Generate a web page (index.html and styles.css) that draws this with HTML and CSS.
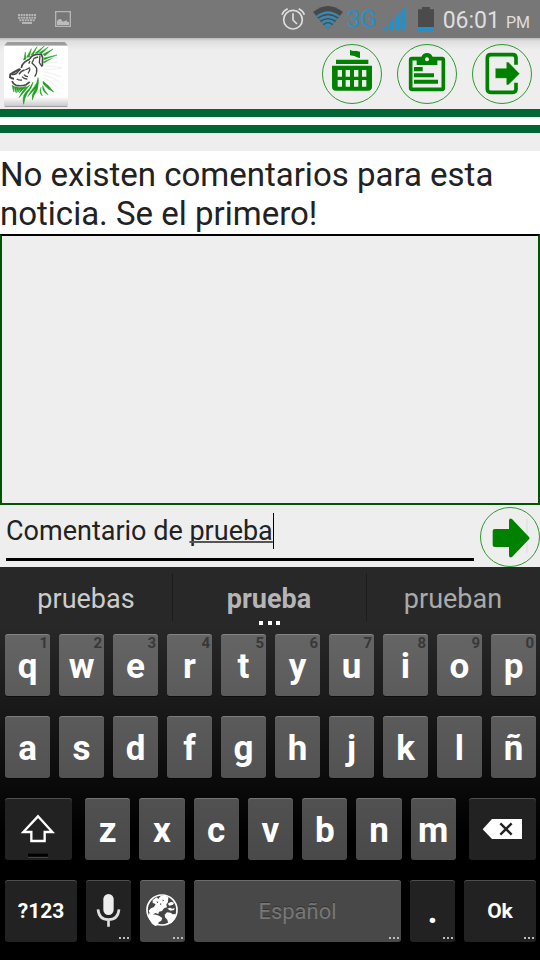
FILE: index.html
```html
<!DOCTYPE html>
<html lang="es">
<head>
<meta charset="utf-8">
<meta name="viewport" content="width=device-width, initial-scale=1">
<title>Comentarios</title>
<link rel="stylesheet" href="styles.css">
</head>
<body>
<div class="screen">
  <div class="status">
    <svg class="status-keyboard" viewBox="54 42 54 30" width="18" height="10" aria-hidden="true">
      <path d="M54 45h54M54 53h54M58 61h46" stroke="#b5b5b5" stroke-width="6" stroke-dasharray="6 2"/>
      <path d="M66 69h30" stroke="#b5b5b5" stroke-width="6"/>
    </svg>
    <svg class="status-picture" viewBox="165 33 48 48" width="16" height="16" aria-hidden="true">
      <path d="M167 35h44v44h-44z" fill="none" stroke="#b5b5b5" stroke-width="4"/>
      <path d="M171 75V64l6-7 6 1 5 7 7-2 4-2 4 5 4 0v9z" fill="#bcbcbc"/>
    </svg>
    <span class="spacer"></span>
    <svg class="status-alarm" viewBox="37 24 72 72" width="24" height="24" aria-hidden="true">
      <g fill="none" stroke="#dedede" stroke-width="5">
        <circle cx="73" cy="62" r="28"/>
        <path d="M73 43v20l12 12M40 47q4-12 17-18M90 29q13 6 17 18"/>
      </g>
    </svg>
    <svg class="status-wifi" viewBox="135 15 90 75" width="30" height="25" aria-hidden="true">
      <path d="M135 36Q180 0 225 36L180 88z" fill="#484848"/>
      <path d="M145 47Q180 20 215 47L180 88z" fill="#3b88ac"/>
      <path d="M149 55Q180 32 211 55M157 64Q180 48 203 64M166 74Q180 62 194 74" fill="none" stroke="#424c51" stroke-width="4"/>
    </svg>
    <span class="network">3G</span>
    <svg class="status-signal" viewBox="333 15 75 75" width="25" height="25" aria-hidden="true">
      <path d="M334 88l20-18v18zM358 88V63l12-11v36zM375 88V48l12-11v51zM392 88V32l14-14v70z" fill="#2590c8"/>
    </svg>
    <svg class="status-battery" viewBox="444 15 48 75" width="16" height="25" aria-hidden="true">
      <path d="M444 25h12v-7h24v7h12v65h-48z" fill="#4b4b4b"/>
      <path d="M444 78h48v12h-48z" fill="#2590c8"/>
    </svg>
    <span class="clock">06:01</span>
    <span class="meridiem">PM</span>
  </div>

  <header class="app-bar">
    <svg class="logo" viewBox="12 123 192 198" width="64" height="66" role="img" aria-label="León">
      <defs>
        <linearGradient id="tile" x1="0" y1="0" x2="0" y2="1">
          <stop offset="0" stop-color="#fff"/><stop offset=".84" stop-color="#fff"/><stop offset="1" stop-color="#c8c8c8"/>
        </linearGradient>
      </defs>
      <path d="M22 126h172l10 11H12z" fill="#9c9c9c"/>
      <path d="M12 137h192v178q0 4-4 4H16q-4 0-4-4z" fill="url(#tile)"/>
      <path d="M14 320h188" stroke="#929292" stroke-width="3"/>
      <g fill="#1fa01f" stroke="#1fa01f" stroke-width="1.500">
        <path d="M71 180l5-24 2 21zM80 172l14-26-6 25zM93 165l18-25-11 24zM105 160l28-22-20 22zM118 158l27-17-20 20zM129 163l30-16-25 21zM132 174l39-9-38 14zM131 185l26-11-25 15z"/>
        <path d="M114 233q5 18-6 32-16 16-25 25 9-18 20-30 9-10 11-27zM99 246q-2 17-17 33-8 13-11 34-5-22 5-35 14-12 23-32zM89 255q-13 18-32 38 7-21 32-38zM113 240q4 19-3 34-10 12-13 26-3-18 8-30 8-12 8-30zM82 261q-14 6-25 18 6-15 25-18zM123 262q-4 10 4 26-12-10-4-26zM128 257q6 16 16 27-18-9-16-27zM129 244q18 12 32 32-19-9-32-25z"/>
        <path d="M36 256l5 20 1-17zM43 260l3 17 4-16zM50 262l0 17 7-17zM57 263l-3 13 13-14zM65 263l-4 12 18-17z"/>
      </g>
      <g fill="none" stroke="#484848" stroke-width="4">
        <path d="M64 204q1-10 9-17 8-6 17-10M90 176q3-8 13-11 10-3 21-2l4 10-1 26" stroke-width="5"/>
        <path d="M120 166l-2 22 8 12M114 171l-14 5M101 178l-5 11 10 10 4 6q2 14-6 25"/>
        <path d="M60 207q-16 8-29 16l-1 9q5 4 12 4" stroke-width="6"/>
        <path d="M36 243q2 8 12 13 18 3 30-2l11-8" stroke-width="5"/>
        <path d="M35 223q12 3 20-9l7-7M57 223q7-11 17-13M76 210l14-7M84 220q5-6 6-14M50 237q8 5 16 3M66 230q7 8 16 7M72 224q4 6 12 6M90 183l-4 8"/>
      </g>
      <path d="M133 190q22-3 42-4M134 199q28-2 51 4M130 208q31 1 57-4M132 216q29 4 51 15M130 225q25 5 51 21M129 233q25 11 42 28M143 176q15-4 31-3" fill="none" stroke="#e9e9e9" stroke-width="2"/>
    </svg>
    <nav class="actions">
      <button class="round" type="button" aria-label="Institución">
        <svg viewBox="156 132 180 180" aria-hidden="true">
          <circle cx="246" cy="222" r="88.5" fill="none" stroke="#2d9a2d" stroke-width="3"/>
          <path d="M240 149q9 6 17 3l13 3v19q-10-2-17-6l-13-2zM198 179h97v13h-97zM186 197h120v63q0 12-12 12h-96q-12 0-12-12z" fill="#008200"/>
          <g fill="#eee"><path d="M203 210h13v20h-13zM227 210h13v20h-13zM252 210h13v20h-13zM276 210h13v20h-13zM203 240h13v20h-13zM227 240h13v20h-13zM252 240h13v20h-13zM276 240h13v20h-13z"/></g>
        </svg>
      </button>
      <button class="round" type="button" aria-label="Noticias">
        <svg viewBox="381 132 180 180" aria-hidden="true">
          <circle cx="471" cy="222" r="88.5" fill="none" stroke="#2d9a2d" stroke-width="3"/>
          <rect x="422" y="176" width="98" height="92" rx="4" fill="none" stroke="#008200" stroke-width="11"/>
          <path d="M440 174l15-4q3-11 16-11t16 11l15 4v21h-62zM432 201h26v13h-26zM432 220h60v12h-60zM432 239h72v12h-72z" fill="#008200"/>
          <circle cx="471" cy="178" r="6" fill="#eee"/>
        </svg>
      </button>
      <button class="round" type="button" aria-label="Salir">
        <svg viewBox="606 132 180 180" aria-hidden="true">
          <circle cx="696" cy="222" r="88.5" fill="none" stroke="#2d9a2d" stroke-width="3"/>
          <path d="M738 194v-20q0-10-10-10h-66q-10 0-10 10v93q0 10 10 10h66q10 0 10-10v-19" fill="none" stroke="#008200" stroke-width="11"/>
          <path d="M676 205h33v-18l6-1 34 35-34 34-6-1v-19h-33z" fill="#008200" stroke="#eee" stroke-width="1"/>
        </svg>
      </button>
    </nav>
  </header>
  <div class="stripes"></div>

  <main class="content">
    <p class="message">No existen comentarios para esta noticia. Se el primero!</p>
    <section class="comments" aria-label="Comentarios"></section>
    <form class="compose">
      <div class="field">
        <input type="text" value="Comentario de prueba" aria-label="Comentario" autocomplete="off" spellcheck="false">
        <span class="composing" aria-hidden="true">Comentario de <u>prueba</u></span>
      </div>
      <button class="round" type="button" aria-label="Enviar">
        <svg viewBox="540 51 180 180" aria-hidden="true">
          <circle cx="630" cy="141" r="88.5" fill="none" stroke="#2d9a2d" stroke-width="3"/>
          <path d="M681 86v102" stroke="#d3e1d3" stroke-width="3"/>
          <path d="M584 117h43V91q1-8 9-4l51 54q3 3 0 7l-51 53q-7 4-9-3v-27h-43q-6 0-6-6v-42q0-6 6-6z" fill="#008200"/>
        </svg>
      </button>
    </form>
  </main>

  <section class="keyboard" aria-label="Teclado">
    <div class="suggestions">
      <button type="button">pruebas</button>
      <button type="button" class="best">prueba</button>
      <button type="button" class="faded">prueban</button>
    </div>
    <div class="keys">
      <div class="row letters tone-1">
        <button type="button">q<sup>1</sup></button><button type="button">w<sup>2</sup></button><button type="button">e<sup>3</sup></button><button type="button">r<sup>4</sup></button><button type="button">t<sup>5</sup></button><button type="button">y<sup>6</sup></button><button type="button">u<sup>7</sup></button><button type="button">i<sup>8</sup></button><button type="button">o<sup>9</sup></button><button type="button">p<sup>0</sup></button>
      </div>
      <div class="row letters tone-2">
        <button type="button">a</button><button type="button">s</button><button type="button">d</button><button type="button">f</button><button type="button">g</button><button type="button">h</button><button type="button">j</button><button type="button">k</button><button type="button">l</button><button type="button">ñ</button>
      </div>
      <div class="row third tone-3">
        <button type="button" class="dark" aria-label="Mayúsculas">
          <svg viewBox="15 24 201 186" width="67" height="62" aria-hidden="true">
            <path d="M114 79l43 47h-23v27H94v-27H70z" fill="none" stroke="#fff" stroke-width="7"/>
            <path d="M84 191h60v10H84z" fill="#000"/><path d="M84 202h60" stroke="#4a4a4a" stroke-width="3"/>
          </svg>
        </button>
        <div class="row letters">
          <button type="button">z</button><button type="button">x</button><button type="button">c</button><button type="button">v</button><button type="button">b</button><button type="button">n</button><button type="button">m</button>
        </div>
        <button type="button" class="dark" aria-label="Borrar">
          <svg viewBox="597 24 201 186" width="67" height="62" aria-hidden="true">
            <path d="M638 118l28-31h90v60h-90z" fill="#fff"/>
            <path d="M691 100l34 34M725 100l-34 34" stroke="#222" stroke-width="7"/>
          </svg>
        </button>
      </div>
      <div class="row fourth tone-4">
        <button type="button" class="dark label">?123</button>
        <button type="button" class="dark more" aria-label="Voz">
          <svg viewBox="255 270 135 186" width="45" height="62" aria-hidden="true">
            <rect x="307" y="312" width="31" height="63" rx="15.500" fill="#ededed"/>
            <path d="M291 358q3 31 31.500 31t31.500-31M322.500 389v21" fill="none" stroke="#dedede" stroke-width="8"/>
          </svg>
        </button>
        <button type="button" class="more" aria-label="Idioma">
          <svg viewBox="420 270 135 186" width="45" height="62" aria-hidden="true">
            <circle cx="486" cy="360" r="45" fill="#454545" stroke="#fff" stroke-width="5"/>
            <g fill="#fff">
              <path d="M458 330l12-8 5 5 6-8 14-3 10 6-1 14-5 7 2 9-9 3-6 8-9 2-2 7-9-3-9 6-7-4-4-9 7-7 9-4 5-9-9-3z"/>
              <path d="M446 370l12 3 10 1 9 3 10 7-3 8-8 5-3 9-7 2-10-7-8-13z"/>
              <path d="M494 374l7-7 11 1 6 5 9-1-3 14-9 13-10 3-3-13-7-7z"/>
              <path d="M503 341l10-6 9 3-3 6-11 3zM502 356l8-3 7 3 7-2-2 6-10 2z"/>
            </g>
            <path d="M469 334l6 2-3 4zM488 328l4 3-4 4zM480 340l5 2-4 4z" fill="#454545"/>
          </svg>
        </button>
        <button type="button" class="more space">Español</button>
        <button type="button" class="dark more dot">.</button>
        <button type="button" class="dark more label">Ok</button>
      </div>
    </div>
  </section>
</div>
</body>
</html>
```
FILE: styles.css
```css
* { box-sizing: border-box; }

body {
  margin: 0;
  background: #eee;
  color: #222;
  font-family: Roboto, "Noto Sans", sans-serif;
}

button {
  margin: 0;
  padding: 0;
  border: 0;
  background: none;
  color: inherit;
  font: inherit;
}

svg { display: block; }

.screen {
  display: flex;
  flex-direction: column;
  min-height: 100vh;
}

/* Status bar */
.status {
  display: flex;
  align-items: center;
  height: 38px;
  padding: 0 10px 0 18px;
  background: #777;
  color: #dedede;
}
.status-picture { margin-left: 19px; }
.spacer { flex: 1; }
.status-wifi { margin: 0 4px 4px 8px; }
.network { color: #2590c8; font-size: 24px; }
.status-signal { margin: 0 12px 2px 4px; }
.status-battery { margin-bottom: 2px; }
.clock { margin-left: 9px; padding-top: 2px; font-size: 23px; }
.meridiem { margin-left: 6px; padding-top: 6px; font-size: 16px; }

/* App bar */
.app-bar {
  display: flex;
  justify-content: space-between;
  height: 71px;
  padding: 3px 8px 0 4px;
  background: linear-gradient(#bbb, #dedede 3px, #eee 12px);
}
.actions { display: flex; gap: 15px; padding-top: 3px; }
.round { flex: none; width: 60px; height: 60px; }
.round svg { width: 100%; height: 100%; }
.stripes {
  height: 24px;
  border: solid #063;
  border-width: 8px 0;
  background: #fff;
}

/* Comments */
.content { display: flex; flex: 1; flex-direction: column; padding-top: 18px; }
.message {
  margin: 0;
  padding: 4px 0 1px;
  background: #fff;
  font-size: 33px;
  line-height: 39px;
}
.comments {
  flex: 1;
  border: 2px solid #050;
  border-top-color: #000;
}
.compose { display: flex; height: 62px; padding-top: 2px; }
.field {
  position: relative;
  flex: 1;
  margin: 0 6px 6px;
  border-bottom: 3px solid #000;
  font-size: 27px;
  line-height: 36px;
}
.field input {
  width: 100%;
  height: 36px;
  margin-top: 6px;
  padding: 0;
  border: 0;
  outline: 0;
  background: none;
  color: inherit;
  font: inherit;
}
.composing {
  position: absolute;
  top: 6px;
  left: 0;
  border-right: 1px solid #000;
  color: transparent;
  pointer-events: none;
  white-space: pre;
}
.composing u {
  text-decoration: underline 2px #555;
  text-decoration-skip-ink: none;
}

/* Keyboard */
.keyboard {
  height: 393px;
  background: linear-gradient(#282828 60px, #000 270px);
  color: #fff;
}
.suggestions {
  display: grid;
  grid-template-columns: 172fr 194fr 174fr;
  height: 60px;
  color: #ccc;
  font-size: 27px;
}
.suggestions button { position: relative; padding-top: 4px; }
.suggestions button + button::before {
  content: "";
  position: absolute;
  inset: 6px auto 6px 0;
  border-left: 1px solid #1c1c1c;
}
.suggestions .best { color: #b5b5b5; font-weight: 700; }
.suggestions .best::after {
  content: "";
  position: absolute;
  bottom: 2px;
  left: calc(50% - 10px);
  width: 4px;
  height: 4px;
  background: #fff;
  box-shadow: 9px 0 #fff, 17px 0 #fff;
}
.suggestions .faded { color: #aaa; }

.keys { display: grid; gap: 20px; padding: 7px 4px 0 5px; }
.row { display: grid; gap: 9px; }
.letters { grid-auto-flow: column; grid-auto-columns: minmax(0, 1fr); }
.third { grid-template-columns: minmax(0, 67fr) minmax(0, 370fr) minmax(0, 67fr); gap: 13px; }
.fourth { grid-template-columns: minmax(0, 72fr) minmax(0, 45fr) minmax(0, 45fr) minmax(0, 207fr) minmax(0, 45fr) minmax(0, 72fr); }

.row button {
  position: relative;
  display: flex;
  justify-content: center;
  align-items: center;
  height: 62px;
  border-radius: 3px;
  box-shadow: inset 0 1px #ffffff33, 0 1px #00000080;
  font-size: 35px;
  font-weight: 700;
}
.letters button { padding-top: 3px; }
.tone-1 button { background: linear-gradient(#656565, #5b5b5b); }
.tone-2 button { background: linear-gradient(#5b5b5b, #525252); }
.tone-3 button { background: linear-gradient(#515151, #494949); }
.tone-4 button { background: #484848; }
.row .dark { background: #222; }
.row sup {
  position: absolute;
  top: 1px;
  right: 2px;
  color: #383838;
  font-size: 15px;
  line-height: 17px;
}
.row .label { font-size: 21px; }
.row .space { color: #777; font-size: 22px; font-weight: 400; text-shadow: 0 -1px #333; }
.more::after {
  content: "";
  position: absolute;
  right: 10px;
  bottom: 3px;
  width: 2px;
  height: 2px;
  background: #bbb;
  box-shadow: 4px 0 #bbb, 8px 0 #bbb;
}
```
